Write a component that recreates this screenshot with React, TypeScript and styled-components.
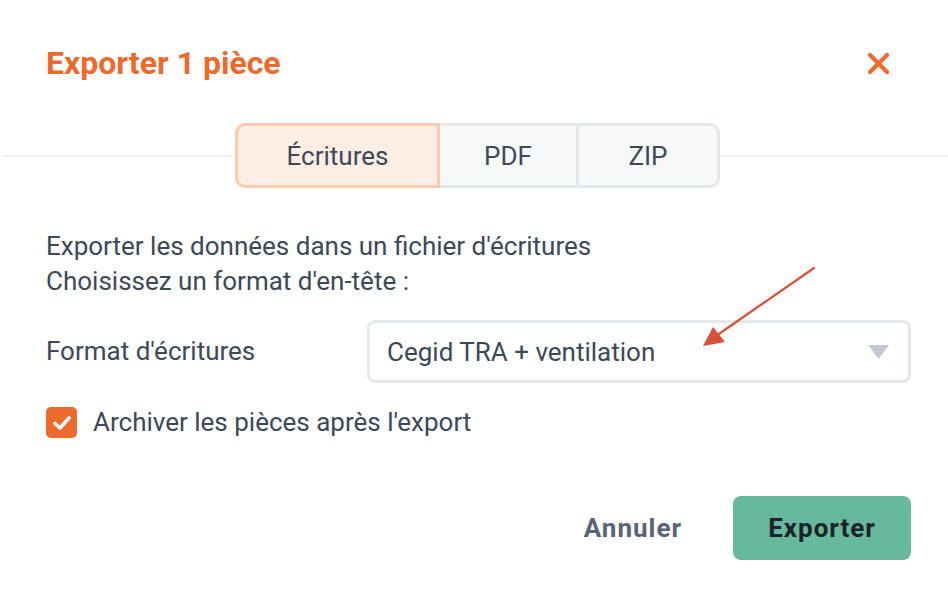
import React from "react";
import styled, { createGlobalStyle } from "styled-components";

const Global = createGlobalStyle`
  html, body { margin: 0; padding: 0; background: #ffffff; }
  body { font-family: Roboto, "Liberation Sans", sans-serif; }
  * { box-sizing: border-box; }
`;

const Dialog = styled.div`
  position: relative;
  width: 948px;
  height: 598px;
  background: #ffffff;
  display: flex;
  flex-direction: column;
  color: #3e4858;
  overflow: hidden;
`;

const Header = styled.div`
  display: flex;
  align-items: center;
  justify-content: space-between;
  padding: 43px 58px 0 46px;
`;

const Title = styled.h1`
  margin: 0;
  font-size: 32px;
  line-height: 40px;
  font-weight: 700;
  color: #ec6a2e;
`;

const CloseButton = styled.button`
  width: 24px;
  height: 24px;
  padding: 0;
  border: none;
  background: transparent;
  display: flex;
  align-items: center;
  justify-content: center;
  cursor: pointer;
`;

const TabsRow = styled.div`
  display: flex;
  align-items: center;
  margin-top: 40px;
`;

const Rule = styled.div<{ $start?: boolean }>`
  flex: 1;
  height: 2px;
  background: #eef0f3;
  margin-left: ${(p) => (p.$start ? "3px" : "0")};
`;

const TabGroup = styled.div`
  display: flex;
  margin-left: 4px;
`;

const Tab = styled.button<{ $active?: boolean; $width: number; $pos: "first" | "mid" | "last" }>`
  width: ${(p) => p.$width}px;
  height: 65px;
  font-family: inherit;
  font-size: 26px;
  color: #3e4858;
  background: ${(p) => (p.$active ? "#fdeee4" : "#f7f8fa")};
  border: 3px solid ${(p) => (p.$active ? "#f9cbb0" : "#e4e7eb")};
  border-left-width: ${(p) => (p.$pos === "first" ? "3px" : "0")};
  border-radius: ${(p) =>
    p.$pos === "first" ? "10px 0 0 10px" : p.$pos === "last" ? "0 10px 10px 0" : "0"};
  display: flex;
  align-items: center;
  justify-content: center;
  padding: 0;
  cursor: pointer;
`;

const Body = styled.div`
  display: flex;
  flex-direction: column;
  padding: 0 37px 0 46px;
  margin-top: 41px;
`;

const Intro = styled.p`
  margin: 0;
  font-size: 26px;
  line-height: 35px;
`;

const FormRow = styled.div`
  display: flex;
  align-items: center;
  margin-top: 21px;
`;

const Label = styled.label`
  width: 321px;
  font-size: 26px;
  line-height: 35px;
`;

const Select = styled.div`
  flex: 1;
  height: 63px;
  border: 3px solid #e4e7ec;
  border-radius: 8px;
  display: flex;
  align-items: center;
  justify-content: space-between;
  padding: 0 19px 0 17px;
  font-size: 26px;
  color: #3e4858;
`;

const CheckRow = styled.label`
  display: flex;
  align-items: center;
  gap: 16px;
  margin-top: 22px;
  font-size: 26px;
  line-height: 35px;
`;

const CheckBox = styled.span`
  width: 31px;
  height: 31px;
  border-radius: 5px;
  background: #ec6a2e;
  display: flex;
  align-items: center;
  justify-content: center;
`;

const Footer = styled.div`
  display: flex;
  align-items: center;
  justify-content: flex-end;
  gap: 51px;
  padding: 0 37px 0 0;
  margin-top: 56px;
`;

const TextButton = styled.button`
  border: none;
  background: transparent;
  padding: 0;
  font-family: inherit;
  font-size: 26px;
  font-weight: 700;
  letter-spacing: 1px;
  color: #5a6476;
  cursor: pointer;
`;

const PrimaryButton = styled.button`
  width: 178px;
  height: 64px;
  border: none;
  border-radius: 8px;
  background: #66b99d;
  font-family: inherit;
  font-size: 26px;
  font-weight: 700;
  letter-spacing: 1px;
  color: #1c2228;
  cursor: pointer;
`;

const Annotation = styled.svg`
  position: absolute;
  left: 0;
  top: 0;
  pointer-events: none;
`;

export default function App() {
  return (
    <>
      <Global />
      <Dialog>
        <Header>
          <Title>Exporter 1 pièce</Title>
          <CloseButton aria-label="Fermer">
            <svg width="23" height="23" viewBox="0 0 23 23">
              <path d="M3 3 L20 20 M20 3 L3 20" stroke="#ec6a2e" strokeWidth="4.2" strokeLinecap="round" />
            </svg>
          </CloseButton>
        </Header>

        <TabsRow>
          <Rule $start />
          <TabGroup>
            <Tab $active $width={205} $pos="first">Écritures</Tab>
            <Tab $width={139} $pos="mid">PDF</Tab>
            <Tab $width={141} $pos="last">ZIP</Tab>
          </TabGroup>
          <Rule />
        </TabsRow>

        <Body>
          <Intro>
            Exporter les données dans un fichier d'écritures
            <br />
            Choisissez un format d'en-tête :
          </Intro>

          <FormRow>
            <Label>Format d'écritures</Label>
            <Select>
              <span>Cegid TRA + ventilation</span>
              <svg width="21" height="14" viewBox="0 0 21 14">
                <path d="M0 0 H21 L10.5 14 Z" fill="#c3c9d3" />
              </svg>
            </Select>
          </FormRow>

          <CheckRow>
            <CheckBox>
              <svg width="20" height="16" viewBox="0 0 20 16">
                <path d="M3 8.5 L8 13 L17 3" stroke="#ffffff" strokeWidth="3.6" fill="none" strokeLinecap="round" strokeLinejoin="round" />
              </svg>
            </CheckBox>
            <span>Archiver les pièces après l'export</span>
          </CheckRow>
        </Body>

        <Footer>
          <TextButton>Annuler</TextButton>
          <PrimaryButton>Exporter</PrimaryButton>
        </Footer>

        <Annotation width="948" height="598" viewBox="0 0 948 598">
          <path d="M814 268 L716 336" stroke="#d9503a" strokeWidth="2.2" strokeLinecap="round" />
          <path d="M703 346 L713 327 L725 342 Z" fill="#d9503a" />
        </Annotation>
      </Dialog>
    </>
  );
}
